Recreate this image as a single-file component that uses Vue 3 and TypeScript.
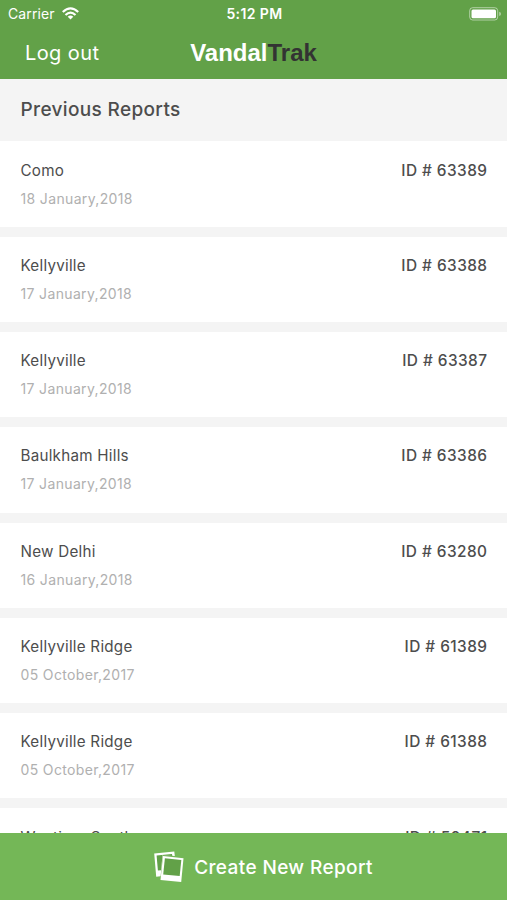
<script setup lang="ts">
interface Report {
  id: number
  place: string
  date: string
}

const reports: Report[] = [
  { id: 63389, place: 'Como', date: '18 January,2018' },
  { id: 63388, place: 'Kellyville', date: '17 January,2018' },
  { id: 63387, place: 'Kellyville', date: '17 January,2018' },
  { id: 63386, place: 'Baulkham Hills', date: '17 January,2018' },
  { id: 63280, place: 'New Delhi', date: '16 January,2018' },
  { id: 61389, place: 'Kellyville Ridge', date: '05 October,2017' },
  { id: 61388, place: 'Kellyville Ridge', date: '05 October,2017' },
  { id: 59471, place: 'Wantirna South', date: '' },
]
</script>

<template>
  <div class="screen">
    <header class="top">
      <div class="status">
        <div class="carrier">
          <span>Carrier</span>
          <svg class="wifi" width="17" height="13" viewBox="0 0 17 13" fill="none" stroke="#fff" stroke-width="2.2">
            <path d="M0.8 5Q8.5 -2.2 16.2 5" />
            <path d="M3.5 8Q8.5 3.2 13.5 8" />
            <path d="M5.7 9.8Q8.5 7.4 11.3 9.8L8.5 12.6Z" fill="#fff" stroke="none" />
          </svg>
        </div>
        <span class="time">5:12 PM</span>
        <svg class="battery" width="33" height="14" viewBox="0 0 33 14">
          <rect x="0.7" y="0.7" width="28" height="12.3" rx="3" fill="none" stroke="#fff" stroke-opacity=".5" />
          <rect x="2.5" y="2.5" width="24.5" height="8.8" rx="1.5" fill="#fff" />
          <path d="M30.2 4.8Q32 5.3 32 6.9T30.2 9Z" fill="#fff" fill-opacity=".5" />
        </svg>
      </div>
      <nav class="nav">
        <button class="logout">Log out</button>
        <h1 class="brand">Vandal<span>Trak</span></h1>
      </nav>
    </header>
    <h2 class="heading">Previous Reports</h2>
    <main class="list">
      <article v-for="r in reports" :key="r.id" class="card">
        <div class="row">
          <span class="place">{{ r.place }}</span>
          <span class="number">ID # {{ r.id }}</span>
        </div>
        <span v-if="r.date" class="date">{{ r.date }}</span>
      </article>
    </main>
    <button class="create">
      <svg width="30" height="32" viewBox="0 0 30 32">
        <path fill="#fff" d="M0.2 2.4L20.3 0.6L20.8 5L8.8 4.1L6.6 25.3L2.2 25.7Z" />
        <path fill="#62a148" d="M2.6 4.4L18 3L18.3 4.9L8.5 4.2L7.1 19.2L3.9 19.5Z" />
        <path fill="#fff" d="M9 5L29.5 7.2L27.2 31L6.5 28.9Z" />
        <path fill="#62a148" d="M10.9 7.2L27.3 8.9L25.7 25L9.2 23.4Z" />
      </svg>
      <span>Create New Report</span>
    </button>
  </div>
</template>

<style>
body {
  margin: 0;
}
</style>

<style scoped>
.screen {
  display: flex;
  flex-direction: column;
  width: 507px;
  height: 900px;
  overflow: hidden;
  background: #f4f4f4;
  color: #4d4d4d;
  font-family: Inter, "Liberation Sans", sans-serif;
}
button {
  margin: 0;
  padding: 0;
  border: 0;
  background: none;
  color: #fff;
  font-family: inherit;
}
.top {
  flex: none;
  height: 79px;
  background: #62a148;
  color: #fff;
}
.status {
  display: grid;
  grid-template-columns: 1fr auto 1fr;
  align-items: center;
  height: 27px;
  padding: 0 6px 0 8px;
}
.carrier {
  display: flex;
  align-items: center;
  gap: 7px;
  font-size: 14px;
  letter-spacing: 0.1px;
}
.time {
  font-size: 14px;
  font-weight: 600;
  letter-spacing: 0.4px;
}
.battery {
  justify-self: end;
  margin-right: -1px;
}
.nav {
  display: grid;
  grid-template-columns: 1fr auto 1fr;
  align-items: center;
  height: 51px;
  padding: 0 25px;
}
.logout {
  justify-self: start;
  font-size: 20px;
  letter-spacing: 0.4px;
}
.brand {
  margin: 0;
  font-family: "Liberation Sans", sans-serif;
  font-size: 24px;
  font-weight: 700;
}
.brand span {
  color: #333;
}
.heading {
  flex: none;
  box-sizing: border-box;
  height: 62.4px;
  margin: 0;
  padding: 0 20.5px;
  font-size: 19px;
  font-weight: 500;
  line-height: 61px;
  letter-spacing: 0.35px;
}
.list {
  flex: 1;
  min-height: 0;
  overflow: hidden;
}
.card {
  box-sizing: border-box;
  height: 85.3px;
  margin-bottom: 10px;
  padding: 19.2px 19.5px 0 20.5px;
  background: #fff;
}
.row {
  display: flex;
  justify-content: space-between;
  line-height: 20px;
  font-size: 15.2px;
}
.place {
  letter-spacing: 0.25px;
}
.number {
  font-size: 15.4px;
  font-weight: 500;
  letter-spacing: 0.45px;
}
.date {
  display: block;
  margin-top: 8px;
  color: #b0b0b0;
  font-size: 14px;
  line-height: 20px;
  letter-spacing: 0.35px;
}
.create {
  display: flex;
  flex: none;
  align-items: center;
  justify-content: center;
  gap: 10px;
  height: 67px;
  padding-left: 20px;
  background: #74b757;
  font-size: 19px;
  font-weight: 500;
  letter-spacing: 0.38px;
}
.create span {
  padding-top: 1px;
}
</style>
